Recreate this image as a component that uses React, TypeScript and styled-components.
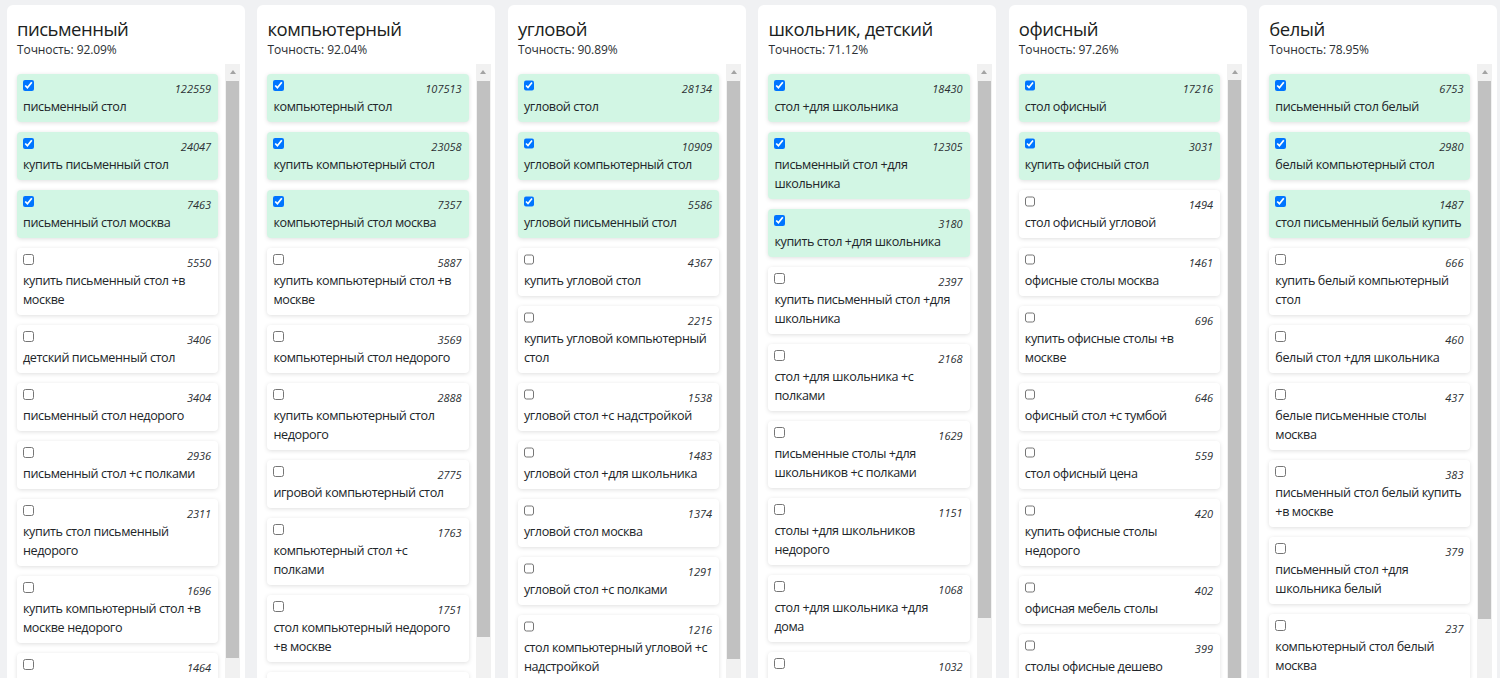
import React from "react";
import styled, { createGlobalStyle } from "styled-components";

type Item = { kw: string; n: number; on?: boolean };
type Group = { title: string; acc: string; thumb: number; items: Item[] };

const groups: Group[] = [
  {
    title: "письменный",
    acc: "92.09%",
    thumb: 577,
    items: [
      { kw: "письменный стол", n: 122559, on: true },
      { kw: "купить письменный стол", n: 24047, on: true },
      { kw: "письменный стол москва", n: 7463, on: true },
      { kw: "купить письменный стол +в\nмоскве", n: 5550 },
      { kw: "детский письменный стол", n: 3406 },
      { kw: "письменный стол недорого", n: 3404 },
      { kw: "письменный стол +с полками", n: 2936 },
      { kw: "купить стол письменный\nнедорого", n: 2311 },
      { kw: "купить компьютерный стол +в\nмоскве недорого", n: 1696 },
      { kw: "письменный стол +для\nдевочки", n: 1464 },
    ],
  },
  {
    title: "компьютерный",
    acc: "92.04%",
    thumb: 556,
    items: [
      { kw: "компьютерный стол", n: 107513, on: true },
      { kw: "купить компьютерный стол", n: 23058, on: true },
      { kw: "компьютерный стол москва", n: 7357, on: true },
      { kw: "купить компьютерный стол +в\nмоскве", n: 5887 },
      { kw: "компьютерный стол недорого", n: 3569 },
      { kw: "купить компьютерный стол\nнедорого", n: 2888 },
      { kw: "игровой компьютерный стол", n: 2775 },
      { kw: "компьютерный стол +с\nполками", n: 1763 },
      { kw: "стол компьютерный недорого\n+в москве", n: 1751 },
      { kw: "компьютерный стол цена", n: 1702 },
    ],
  },
  {
    title: "угловой",
    acc: "90.89%",
    thumb: 578,
    items: [
      { kw: "угловой стол", n: 28134, on: true },
      { kw: "угловой компьютерный стол", n: 10909, on: true },
      { kw: "угловой письменный стол", n: 5586, on: true },
      { kw: "купить угловой стол", n: 4367 },
      { kw: "купить угловой компьютерный\nстол", n: 2215 },
      { kw: "угловой стол +с надстройкой", n: 1538 },
      { kw: "угловой стол +для школьника", n: 1483 },
      { kw: "угловой стол москва", n: 1374 },
      { kw: "угловой стол +с полками", n: 1291 },
      { kw: "стол компьютерный угловой +с\nнадстройкой", n: 1216 },
    ],
  },
  {
    title: "школьник, детский",
    acc: "71.12%",
    thumb: 537,
    items: [
      { kw: "стол +для школьника", n: 18430, on: true },
      { kw: "письменный стол +для\nшкольника", n: 12305, on: true },
      { kw: "купить стол +для школьника", n: 3180, on: true },
      { kw: "купить письменный стол +для\nшкольника", n: 2397 },
      { kw: "стол +для школьника +с\nполками", n: 2168 },
      { kw: "письменные столы +для\nшкольников +с полками", n: 1629 },
      { kw: "столы +для школьников\nнедорого", n: 1151 },
      { kw: "стол +для школьника +для\nдома", n: 1068 },
      { kw: "детский письменный стол", n: 1032 },
    ],
  },
  {
    title: "офисный",
    acc: "97.26%",
    thumb: 700,
    items: [
      { kw: "стол офисный", n: 17216, on: true },
      { kw: "купить офисный стол", n: 3031, on: true },
      { kw: "стол офисный угловой", n: 1494 },
      { kw: "офисные столы москва", n: 1461 },
      { kw: "купить офисные столы +в\nмоскве", n: 696 },
      { kw: "офисный стол +с тумбой", n: 646 },
      { kw: "стол офисный цена", n: 559 },
      { kw: "купить офисные столы\nнедорого", n: 420 },
      { kw: "офисная мебель столы", n: 402 },
      { kw: "столы офисные дешево", n: 399 },
    ],
  },
  {
    title: "белый",
    acc: "78.95%",
    thumb: 538,
    items: [
      { kw: "письменный стол белый", n: 6753, on: true },
      { kw: "белый компьютерный стол", n: 2980, on: true },
      { kw: "стол письменный белый купить", n: 1487, on: true },
      { kw: "купить белый компьютерный\nстол", n: 666 },
      { kw: "белый стол +для школьника", n: 460 },
      { kw: "белые письменные столы\nмосква", n: 437 },
      { kw: "письменный стол белый купить\n+в москве", n: 383 },
      { kw: "письменный стол +для\nшкольника белый", n: 379 },
      { kw: "компьютерный стол белый\nмосква", n: 237 },
    ],
  },
];

const Global = createGlobalStyle`
  html, body {
    margin: 0;
    padding: 0;
    overflow: hidden;
    background: #f0f1f3;
  }
  body {
    font-family: "Open Sans", "Noto Sans", sans-serif;
    color: #212529;
  }
`;

const Board = styled.div`
  box-sizing: border-box;
  height: 678px;
  overflow: hidden;
  display: grid;
  grid-template-columns: repeat(6, 1fr);
  column-gap: 12.8px;
  align-items: start;
  padding: 5px 3px 0 7px;
  background: #f0f1f3;
`;

const Panel = styled.section`
  box-sizing: border-box;
  height: 740px;
  background: #ffffff;
  border-radius: 6px;
  padding: 12px 4.5px 0 10px;
  display: flex;
  flex-direction: column;
  min-width: 0;
`;

const Title = styled.h2`
  margin: 0;
  font-size: 18.5px;
  letter-spacing: -0.5px;
  line-height: 23px;
  font-weight: 400;
  color: #1b1e21;
  white-space: nowrap;
`;

const Accuracy = styled.div`
  margin-top: 2px;
  font-size: 12px;
  letter-spacing: -0.1px;
  line-height: 16px;
  color: #2b2f33;
`;

const ListRow = styled.div`
  margin-top: 6px;
  flex: 1;
  min-height: 0;
  display: flex;
  align-items: stretch;
`;

const Cards = styled.div`
  flex: 1;
  min-width: 0;
  margin-right: 7px;
  padding-top: 10px;
  display: flex;
  flex-direction: column;
  gap: 10px;
`;

const Card = styled.div<{ $on?: boolean }>`
  box-sizing: border-box;
  background: ${(p) => (p.$on ? "#d2f6e4" : "#ffffff")};
  border-radius: 4px;
  padding: 6px 7px 6px 6px;
  box-shadow: 0 1px 4px rgba(0, 0, 0, 0.13);
`;

const CardTop = styled.div`
  display: flex;
  justify-content: space-between;
  align-items: flex-start;
  height: 17px;
`;

const Check = styled.input`
  width: 10.5px;
  height: 10.5px;
  margin: 0;
`;

const Count = styled.span`
  font-size: 11px;
  line-height: 17px;
  font-style: italic;
  color: #2b2f33;
`;

const Keyword = styled.div`
  font-size: 12.6px;
  letter-spacing: -0.4px;
  line-height: 19px;
  white-space: pre;
  color: #212529;
`;

const Scrollbar = styled.div`
  width: 15px;
  flex: none;
  background: #f1f1f1;
  display: flex;
  flex-direction: column;
  align-items: center;
`;

const ScrollUp = styled.div`
  height: 16px;
  width: 100%;
  display: flex;
  align-items: center;
  justify-content: center;
  &::before {
    content: "";
    width: 0;
    height: 0;
    border-left: 3.5px solid transparent;
    border-right: 3.5px solid transparent;
    border-bottom: 4px solid #a3a3a3;
  }
`;

const Thumb = styled.div<{ $h: number }>`
  margin-top: 1px;
  width: 13px;
  height: ${(p) => p.$h}px;
  background: #c1c1c1;
`;

export default function App() {
  return (
    <>
      <Global />
      <Board>
        {groups.map((g) => (
          <Panel key={g.title}>
            <Title>{g.title}</Title>
            <Accuracy>Точность: {g.acc}</Accuracy>
            <ListRow>
              <Cards>
                {g.items.map((it) => (
                  <Card key={it.kw + it.n} $on={it.on}>
                    <CardTop>
                      <Check type="checkbox" checked={!!it.on} readOnly />
                      <Count>{it.n}</Count>
                    </CardTop>
                    <Keyword>{it.kw}</Keyword>
                  </Card>
                ))}
              </Cards>
              <Scrollbar>
                <ScrollUp />
                <Thumb $h={g.thumb} />
              </Scrollbar>
            </ListRow>
          </Panel>
        ))}
      </Board>
    </>
  );
}
